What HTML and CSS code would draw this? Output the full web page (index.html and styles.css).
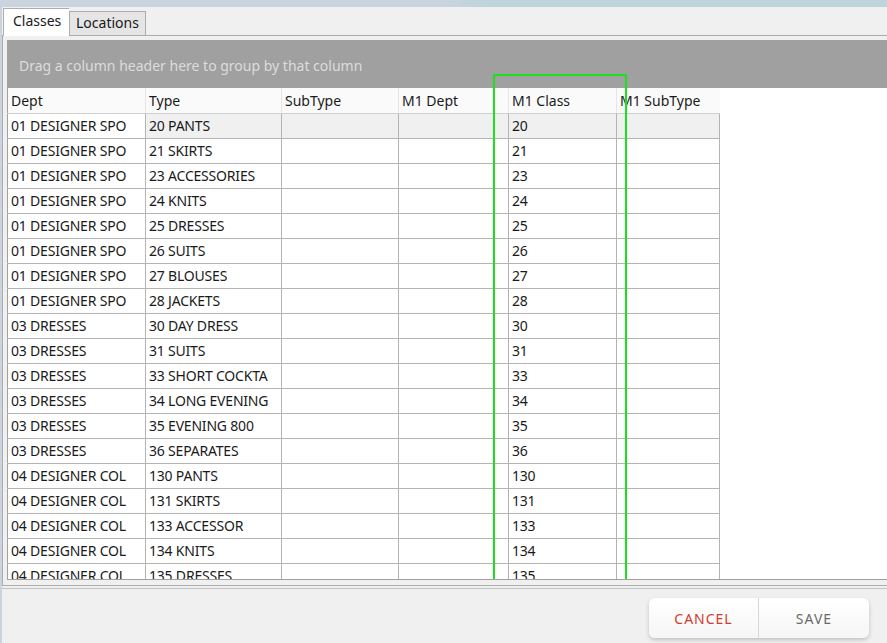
FILE: index.html
```html
<!DOCTYPE html>
<html lang="en">
<head>
    <meta charset="UTF-8">
    <title>Class Mapping</title>
    <link rel="stylesheet" href="styles.css">
</head>
<body>
    <div class="title-strip"></div>

    <div class="window">
        <!-- Tabs -->
        <div class="tabs">
            <div class="tab active">Classes</div>
            <div class="tab">Locations</div>
        </div>

        <!-- Tab page with the grid -->
        <div class="tab-page">
            <div class="grid">
                <div class="group-panel">Drag a column header here to group by that column</div>
                <table class="grid-table">
                    <colgroup>
                        <col class="c-dept">
                        <col class="c-type">
                        <col class="c-subtype">
                        <col class="c-m1dept">
                        <col class="c-m1class">
                        <col class="c-m1sub">
                    </colgroup>
                    <thead>
                        <tr>
                            <th>Dept</th>
                            <th>Type</th>
                            <th>SubType</th>
                            <th>M1 Dept</th>
                            <th>M1 Class</th>
                            <th>M1 SubType</th>
                        </tr>
                    </thead>
                    <tbody>
                        <tr class="selected"><td class="focus">01 DESIGNER SPO</td><td>20 PANTS</td><td></td><td></td><td>20</td><td></td></tr>
                        <tr><td>01 DESIGNER SPO</td><td>21 SKIRTS</td><td></td><td></td><td>21</td><td></td></tr>
                        <tr><td>01 DESIGNER SPO</td><td>23 ACCESSORIES</td><td></td><td></td><td>23</td><td></td></tr>
                        <tr><td>01 DESIGNER SPO</td><td>24 KNITS</td><td></td><td></td><td>24</td><td></td></tr>
                        <tr><td>01 DESIGNER SPO</td><td>25 DRESSES</td><td></td><td></td><td>25</td><td></td></tr>
                        <tr><td>01 DESIGNER SPO</td><td>26 SUITS</td><td></td><td></td><td>26</td><td></td></tr>
                        <tr><td>01 DESIGNER SPO</td><td>27 BLOUSES</td><td></td><td></td><td>27</td><td></td></tr>
                        <tr><td>01 DESIGNER SPO</td><td>28 JACKETS</td><td></td><td></td><td>28</td><td></td></tr>
                        <tr><td>03 DRESSES</td><td>30 DAY DRESS</td><td></td><td></td><td>30</td><td></td></tr>
                        <tr><td>03 DRESSES</td><td>31 SUITS</td><td></td><td></td><td>31</td><td></td></tr>
                        <tr><td>03 DRESSES</td><td>33 SHORT COCKTA</td><td></td><td></td><td>33</td><td></td></tr>
                        <tr><td>03 DRESSES</td><td>34 LONG EVENING</td><td></td><td></td><td>34</td><td></td></tr>
                        <tr><td>03 DRESSES</td><td>35 EVENING 800</td><td></td><td></td><td>35</td><td></td></tr>
                        <tr><td>03 DRESSES</td><td>36 SEPARATES</td><td></td><td></td><td>36</td><td></td></tr>
                        <tr><td>04 DESIGNER COL</td><td>130 PANTS</td><td></td><td></td><td>130</td><td></td></tr>
                        <tr><td>04 DESIGNER COL</td><td>131 SKIRTS</td><td></td><td></td><td>131</td><td></td></tr>
                        <tr><td>04 DESIGNER COL</td><td>133 ACCESSOR</td><td></td><td></td><td>133</td><td></td></tr>
                        <tr><td>04 DESIGNER COL</td><td>134 KNITS</td><td></td><td></td><td>134</td><td></td></tr>
                        <tr><td>04 DESIGNER COL</td><td>135 DRESSES</td><td></td><td></td><td>135</td><td></td></tr>
                    </tbody>
                </table>
                <!-- highlight drawn over the M1 Class column -->
                <div class="highlight"></div>
            </div>
        </div>

        <!-- Footer buttons -->
        <div class="footer">
            <div class="btn-group">
                <button class="btn cancel">CANCEL</button>
                <button class="btn save">SAVE</button>
            </div>
        </div>
    </div>
</body>
</html>
```

FILE: styles.css
```css
body {
    margin: 0;
    background-color: #f0f0f0;
    font-family: "Noto Sans", "Open Sans", sans-serif;
    font-size: 13px;
    color: #1a1a1a;
    overflow: hidden;
    height: 643px;
}

.title-strip {
    height: 7px;
    background: linear-gradient(to right, #c9d4df 0%, #c9d4df 50%, #bed4dc 55%, #bed4dc 100%);
}

.window {
    border-left: 2px solid #c9d4df;
    height: 636px;
    display: flex;
    flex-direction: column;
}

/* Tabs */
.tabs {
    display: flex;
    align-items: flex-end;
    height: 28px;
    padding-left: 1px;
}

.tab {
    height: 24px;
    line-height: 22px;
    padding: 0 6px;
    border: 1px solid #adadad;
    border-bottom: none;
    background-color: #e5e5e5;
    box-sizing: border-box;
    font-size: 14px;
}

.tab.active {
    height: 28px;
    line-height: 24px;
    padding: 0 9px 0 9px;
    background-color: #fff;
    border-right: none;
    position: relative;
    z-index: 1;
    margin-bottom: -1px;
    width: 66px;
}

.tab-page {
    border-top: 1px solid #adadad;
    border-left: 1px solid #adadad;
    border-bottom: 1px solid #adadad;
    padding: 4px 0 4px 4px;
    height: 541px;
    box-sizing: content-box;
}

/* Grid */
.grid {
    position: relative;
    height: 540px;
    background-color: #fff;
    overflow: hidden;
    border-bottom: 1px solid #a0a0a0;
    box-sizing: border-box;
}

.group-panel {
    height: 48px;
    background-color: #a0a0a0;
    color: #dcdcdc;
    font-size: 14px;
    line-height: 52px;
    padding-left: 12px;
    box-sizing: border-box;
}

.grid-table {
    border-collapse: collapse;
    table-layout: fixed;
    width: 712px;
}

.c-dept { width: 138px; }
.c-type { width: 136px; }
.c-subtype { width: 117px; }
.c-m1dept { width: 110px; }
.c-m1class { width: 108px; }
.c-m1sub { width: 103px; }

.grid-table th {
    height: 25px;
    padding: 0 3px;
    text-align: left;
    font-weight: normal;
    font-size: 14px;
    background-color: #fafafa;
    border-left: 1px solid #e6e6e6;
    border-bottom: 1px solid #cfcfcf;
    box-sizing: border-box;
    white-space: nowrap;
    overflow: hidden;
}

.grid-table td {
    height: 25px;
    padding: 0 3px 1px 3px;
    font-size: 14px;
    border: 1px solid #b4b4b4;
    border-top: none;
    box-sizing: border-box;
    white-space: nowrap;
    overflow: hidden;
    letter-spacing: -0.2px;
}

.grid-table td:first-child,
.grid-table th:first-child {
    border-left: 1px solid #a0a0a0;
}

.grid-table tr.selected td {
    background-color: #f0f0f0;
}

.grid-table tr.selected td.focus {
    background-color: #fff;
}

.highlight {
    position: absolute;
    left: 486px;
    top: 34px;
    width: 134px;
    height: 507px;
    border: 2px solid #1ee01a;
    box-sizing: border-box;
    pointer-events: none;
}

/* Footer */
.footer {
    border-top: 1px solid #c4c4c8;
    margin-top: 2px;
    flex: 1;
    display: flex;
    justify-content: flex-end;
    padding: 9px 18px 0 0;
}

.btn-group {
    display: flex;
    height: 40px;
    border-radius: 6px;
    background: linear-gradient(#ffffff, #f6f6f6);
    box-shadow: 0 2px 4px rgba(0, 0, 0, 0.2);
}

.btn {
    width: 110px;
    border: none;
    background: transparent;
    font-family: "Noto Sans", sans-serif;
    font-size: 14px;
    letter-spacing: 1px;
    cursor: pointer;
}

.btn.cancel {
    color: #d23a2f;
    border-right: 1px solid #d8d8d8;
}

.btn.save {
    color: #6a6a6a;
}
```
